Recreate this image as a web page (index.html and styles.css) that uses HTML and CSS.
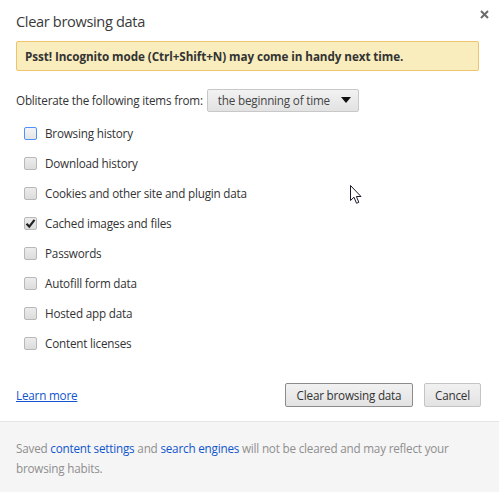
FILE: index.html
```html
<!DOCTYPE html>
<html>
<head>
<meta charset="utf-8">
<link rel="stylesheet" href="styles.css">
</head>
<body>
<div class="dialog">
  <div class="header">
    <div class="title">Clear browsing data</div>
    <div class="close">
      <svg width="9" height="9" viewBox="0 0 9 9"><path d="M1 1L8 8M8 1L1 8" stroke="#6b6b6b" stroke-width="2"/></svg>
    </div>
  </div>
  <div class="banner">Psst! Incognito mode (Ctrl+Shift+N) may come in handy next time.</div>
  <div class="from-row">
    <span>Obliterate the following items from:</span>
    <div class="select"><span>the beginning of time</span><span class="tri"></span></div>
  </div>
  <div class="list">
    <label class="item"><span class="box focus"></span><span>Browsing history</span></label>
    <label class="item"><span class="box"></span><span>Download history</span></label>
    <label class="item"><span class="box"></span><span>Cookies and other site and plugin data</span></label>
    <label class="item"><span class="box checked"><svg width="11" height="11" viewBox="0 0 11 11"><path d="M1.5 5.8L4.3 8.6L9.5 1.8" fill="none" stroke="#222" stroke-width="2.2"/></svg></span><span>Cached images and files</span></label>
    <label class="item"><span class="box"></span><span>Passwords</span></label>
    <label class="item"><span class="box"></span><span>Autofill form data</span></label>
    <label class="item"><span class="box"></span><span>Hosted app data</span></label>
    <label class="item"><span class="box"></span><span>Content licenses</span></label>
  </div>
  <div class="actions">
    <a class="learn" href="#">Learn more</a>
    <div class="buttons">
      <button class="btn default">Clear browsing data</button>
      <button class="btn cancel">Cancel</button>
    </div>
  </div>
  <div class="note"><p class="note-line">Saved <a href="#">content settings</a> and <a href="#">search engines</a> will not be cleared and may reflect your</p><p class="note-line">browsing habits.</p></div>
  <svg class="cursor" width="13" height="20" viewBox="0 0 13 20"><path d="M0.5 0.5L0.5 15.5L4 12.2L6.5 18.3L8.8 17.3L6.4 11.5L11 11.5Z" fill="#fff" stroke="#1a1a2e" stroke-width="1" stroke-linejoin="miter"/></svg>
</div>
</body>
</html>
```

FILE: styles.css
```css
html, body {
  margin: 0;
  padding: 0;
  background: #fff;
}
.dialog {
  position: relative;
  width: 499px;
  height: 492px;
  font-family: "Open Sans", "Noto Sans", sans-serif;
  font-size: 11.7px;
  letter-spacing: -0.2px;
  color: #333;
  overflow: hidden;
}
.header {
  padding: 10px 16px 0 16px;
  height: 31px;
}
.title {
  font-size: 14.6px;
  letter-spacing: -0.35px;
  line-height: 22px;
  color: #3a3a3a;
}
.close {
  position: absolute;
  top: 10px;
  right: 10px;
  width: 9px;
  height: 9px;
}
.close svg { display: block; }
.banner {
  margin: 0 20px 0 16px;
  height: 28px;
  box-sizing: content-box;
  border: 1px solid #f0c36d;
  border-radius: 2px;
  background: #f9edbe;
  padding: 0 8px;
  font-weight: bold;
  letter-spacing: -0.08px;
  line-height: 28px;
  color: #333;
  white-space: nowrap;
}
.from-row {
  display: flex;
  align-items: center;
  gap: 4px;
  margin: 17px 0 0 16px;
  height: 24px;
}
.select {
  display: flex;
  align-items: center;
  justify-content: space-between;
  width: 152px;
  height: 23px;
  box-sizing: border-box;
  padding: 0 7px 0 10px;
  border: 1px solid #c8c8c8;
  border-radius: 2px;
  background: linear-gradient(#f2f2f2, #e2e2e2);
  color: #444;
  white-space: nowrap;
}
.tri {
  width: 0;
  height: 0;
  border-left: 5px solid transparent;
  border-right: 5px solid transparent;
  border-top: 6px solid #111;
}
.list {
  margin-top: 6px;
  padding-left: 24px;
}
.item {
  display: flex;
  align-items: center;
  gap: 8px;
  height: 30px;
}
.box {
  display: flex;
  align-items: center;
  justify-content: center;
  width: 13px;
  height: 13px;
  box-sizing: border-box;
  border: 1px solid #b8b8b8;
  border-radius: 2px;
  background: linear-gradient(#ececec, #dcdcdc);
}
.box.focus {
  border-color: #4d90fe;
  background: linear-gradient(#f4f4f4, #e4e4e4);
}
.box svg { display: block; }
.actions {
  display: flex;
  align-items: center;
  justify-content: space-between;
  margin-top: 25px;
  padding: 0 18px 0 16px;
  height: 24px;
}
.learn {
  color: #15c;
  text-decoration: underline;
}
.buttons {
  display: flex;
  gap: 11px;
}
.btn {
  font-family: inherit;
  font-size: 11.7px;
  letter-spacing: -0.2px;
  color: #333;
  height: 24px;
  padding: 0;
  white-space: nowrap;
  border: 1px solid #c4c4c4;
  border-radius: 2px;
  background: linear-gradient(#f1f1f1, #e3e3e3);
}
.btn.default {
  border-color: #8c8c8c;
  width: 128px;
}
.btn.cancel {
  width: 57px;
}
.note {
  margin-top: 14px;
  border-top: 1px solid #e5e5e5;
  background: #f5f5f5;
  padding: 16px 16px 0 16px;
  height: 80px;
  color: #8f8f8f;
}
.note-line {
  margin: 0;
  height: 20px;
  line-height: 20px;
  white-space: nowrap;
}
.note a {
  color: #15c;
  text-decoration: none;
}
.cursor {
  position: absolute;
  left: 350px;
  top: 185px;
}
```
